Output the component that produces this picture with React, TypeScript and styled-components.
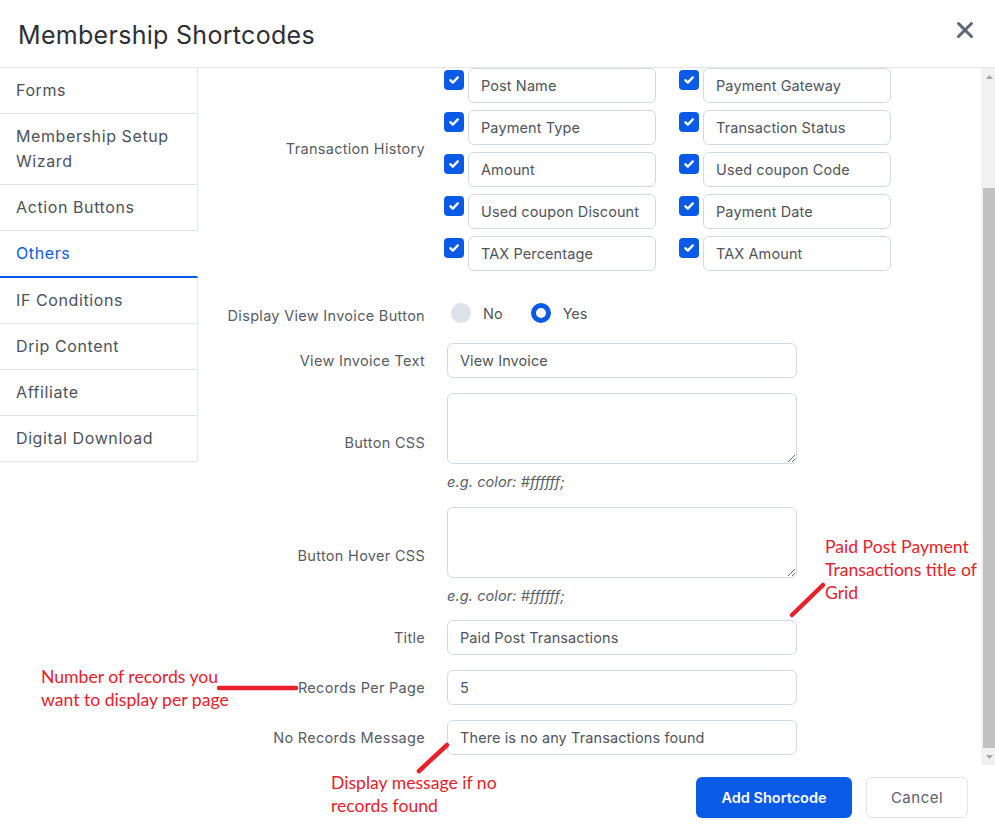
import React, { useLayoutEffect, useRef, useState } from "react";
import styled, { createGlobalStyle } from "styled-components";

const GlobalStyle = createGlobalStyle`
  html, body { margin: 0; padding: 0; background: #fff; }
  body { font-family: Inter, "Open Sans", sans-serif; }
  * { box-sizing: border-box; }
`;

const FONT = `Inter, "Open Sans", sans-serif`;

const Modal = styled.div`
  position: relative;
  width: 995px;
  height: 830px;
  display: flex;
  flex-direction: column;
  background: #fff;
  overflow: hidden;
`;

const Header = styled.header`
  height: 68px;
  flex: none;
  display: flex;
  align-items: center;
  justify-content: space-between;
  padding: 2px 18px 0 18px;
  border-bottom: 1px solid #e4e6eb;
`;

const Title = styled.h1`
  margin: 0;
  font-family: ${FONT};
  font-size: 25px;
  letter-spacing: 0.3px;
  font-weight: 400;
  color: #2c2f36;
`;

const CloseButton = styled.button`
  border: 0;
  background: none;
  padding: 0;
  width: 24px;
  height: 24px;
  margin-top: -10px;
  display: flex;
  align-items: center;
  justify-content: center;
  color: #5f6674;
  cursor: pointer;
`;

const Body = styled.div`
  flex: 1;
  min-height: 0;
  display: flex;
`;

const Sidebar = styled.nav`
  width: 198px;
  flex: none;
  display: flex;
  flex-direction: column;
`;

const NavItem = styled.div<{ $active?: boolean }>`
  padding: 10px 16px;
  font-family: ${FONT};
  font-size: 16px;
  letter-spacing: 0.6px;
  line-height: 25px;
  white-space: nowrap;
  color: ${(p) => (p.$active ? "#0a5ce6" : "#4d525c")};
  border-right: 1px solid ${(p) => (p.$active ? "transparent" : "#e2e5ec")};
  border-bottom: ${(p) => (p.$active ? "2px solid #0a5ce6" : "1px solid #e2e5ec")};
`;

const Content = styled.div`
  flex: 1;
  min-width: 0;
  overflow-y: scroll;
  scrollbar-width: none;
  &::-webkit-scrollbar {
    display: none;
  }
`;

const ScrollTrack = styled.div`
  width: 14px;
  flex: none;
  background: #f1f1f1;
  display: flex;
  flex-direction: column;
`;

const ScrollArrow = styled.div`
  height: 17px;
  flex: none;
  display: flex;
  align-items: center;
  justify-content: center;
  padding-left: 2px;
`;

const ScrollRail = styled.div`
  flex: 1;
  display: flex;
  flex-direction: column;
`;

const ScrollThumb = styled.div`
  margin-left: 2px;
  background: #c1c1c1;
`;

const Form = styled.div`
  display: flex;
  flex-direction: column;
  gap: 15px;
  padding: 86px 0 10px;
`;

const Row = styled.div<{ $extraBottom?: number }>`
  display: grid;
  grid-template-columns: 227px 350px;
  column-gap: 22px;
  align-items: center;
  margin-bottom: ${(p) => p.$extraBottom ?? 0}px;
`;

const Label = styled.label`
  text-align: right;
  font-family: ${FONT};
  font-size: 14.5px;
  letter-spacing: 0.3px;
  color: #575b64;
  white-space: nowrap;
`;

const TextInput = styled.input`
  width: 100%;
  height: 35px;
  border: 1px solid #d3d8e2;
  border-radius: 6px;
  padding: 0 12px;
  font-family: ${FONT};
  font-size: 14.5px;
  letter-spacing: 0.1px;
  color: #50545c;
  background: #fff;
  outline: none;
`;

const TextArea = styled.textarea`
  display: block;
  width: 100%;
  height: 71px;
  border: 1px solid #d3d8e2;
  border-radius: 6px;
  padding: 8px 12px;
  font-family: ${FONT};
  font-size: 14px;
  color: #50545c;
  background: #fff;
  outline: none;
`;

const Hint = styled.div`
  margin-top: 9px;
  font-family: ${FONT};
  font-size: 14.5px;
  letter-spacing: 0.1px;
  line-height: 18.5px;
  font-style: italic;
  color: #5a5e66;
`;

const CheckGrid = styled.div`
  display: grid;
  grid-template-columns: 212px 212px;
  column-gap: 23px;
  row-gap: 7px;
  margin-left: -3px;
`;

const CheckField = styled.div`
  display: flex;
  align-items: flex-start;
  gap: 4px;
`;

const CheckBox = styled.span`
  flex: none;
  width: 20px;
  height: 20px;
  margin-top: 2px;
  border-radius: 4px;
  background: #0a5ae8;
  display: flex;
  align-items: center;
  justify-content: center;
`;

const RadioGroup = styled.div`
  display: flex;
  align-items: center;
  gap: 28px;
  height: 26px;
  padding-left: 4px;
`;

const RadioOption = styled.label`
  display: flex;
  align-items: center;
  gap: 12px;
  font-family: ${FONT};
  font-size: 14.5px;
  color: #50545c;
  margin-top: -4px;
`;

const RadioDot = styled.span<{ $checked?: boolean }>`
  width: 20px;
  height: 20px;
  border-radius: 50%;
  box-sizing: border-box;
  background: ${(p) => (p.$checked ? "#fff" : "#dde1ea")};
  border: ${(p) => (p.$checked ? "5px solid #0a5ae8" : "0")};
`;

const Footer = styled.footer`
  flex: none;
  height: 65px;
  display: flex;
  justify-content: flex-end;
  align-items: flex-start;
  gap: 14px;
  padding: 12px 27px 0;
`;

const PrimaryButton = styled.button`
  width: 156px;
  height: 41px;
  border: 0;
  border-radius: 6px;
  background: #0a5ae8;
  color: #fff;
  font-family: ${FONT};
  font-size: 14.5px;
  font-weight: 600;
  cursor: pointer;
`;

const SecondaryButton = styled.button`
  width: 102px;
  height: 41px;
  border: 1px solid #e1e4ea;
  border-radius: 6px;
  background: #fff;
  color: #5a5f6b;
  font-family: ${FONT};
  font-size: 15px;
  letter-spacing: 0.5px;
  cursor: pointer;
`;

const Note = styled.div<{ $x: number; $y: number }>`
  position: absolute;
  left: ${(p) => p.$x}px;
  top: ${(p) => p.$y}px;
  font-family: Lato, "Open Sans", sans-serif;
  font-size: 17.6px;
  line-height: 23px;
  color: #e8202a;
  white-space: nowrap;
`;

const Overlay = styled.svg`
  position: absolute;
  left: 0;
  top: 0;
  pointer-events: none;
`;

const navItems = [
  "Forms",
  "Membership Setup Wizard",
  "Action Buttons",
  "Others",
  "IF Conditions",
  "Drip Content",
  "Affiliate",
  "Digital Download",
];

const checkFields: [string, string][] = [
  ["Transaction ID", "Member Name"],
  ["Post Name", "Payment Gateway"],
  ["Payment Type", "Transaction Status"],
  ["Amount", "Used coupon Code"],
  ["Used coupon Discount", "Payment Date"],
  ["TAX Percentage", "TAX Amount"],
];

const Check = () => (
  <CheckBox>
    <svg width="12" height="12" viewBox="0 0 12 12">
      <path d="M2.3 6.2 L4.8 8.6 L9.8 3.4" fill="none" stroke="#fff" strokeWidth="2.3" strokeLinecap="round" strokeLinejoin="round" />
    </svg>
  </CheckBox>
);

export default function App() {
  const scrollRef = useRef<HTMLDivElement>(null);
  const railRef = useRef<HTMLDivElement>(null);
  const [thumb, setThumb] = useState({ top: 0, height: 0 });

  useLayoutEffect(() => {
    const el = scrollRef.current;
    const rail = railRef.current;
    if (!el || !rail) return;
    el.scrollTop = el.scrollHeight;
    const railH = rail.clientHeight;
    const ratio = el.clientHeight / el.scrollHeight;
    const h = Math.max(20, Math.round(railH * ratio));
    const maxScroll = el.scrollHeight - el.clientHeight;
    const top = maxScroll > 0 ? Math.round(((railH - h) * el.scrollTop) / maxScroll) : 0;
    setThumb({ top, height: h });
  }, []);

  return (
    <>
      <GlobalStyle />
      <Modal>
        <Header>
          <Title>Membership Shortcodes</Title>
          <CloseButton aria-label="Close">
            <svg width="18" height="18" viewBox="0 0 18 18">
              <path d="M2.5 2.5 L15.5 15.5 M15.5 2.5 L2.5 15.5" stroke="currentColor" strokeWidth="3" strokeLinecap="round" />
            </svg>
          </CloseButton>
        </Header>
        <Body>
          <Sidebar>
            {navItems.map((n) => (
              <NavItem key={n} $active={n === "Others"}>
                {n === "Membership Setup Wizard" ? (
                  <>
                    Membership Setup
                    <br />
                    Wizard
                  </>
                ) : (
                  n
                )}
              </NavItem>
            ))}
          </Sidebar>
          <Content ref={scrollRef}>
            <Form>
              <Row $extraBottom={16}>
                <Label>Transaction History</Label>
                <CheckGrid>
                  {checkFields.flat().map((f) => (
                    <CheckField key={f}>
                      <Check />
                      <TextInput defaultValue={f} />
                    </CheckField>
                  ))}
                </CheckGrid>
              </Row>
              <Row>
                <Label>Display View Invoice Button</Label>
                <RadioGroup>
                  <RadioOption>
                    <RadioDot />
                    No
                  </RadioOption>
                  <RadioOption>
                    <RadioDot $checked />
                    Yes
                  </RadioOption>
                </RadioGroup>
              </Row>
              <Row>
                <Label>View Invoice Text</Label>
                <TextInput defaultValue="View Invoice" />
              </Row>
              <Row>
                <Label>Button CSS</Label>
                <div>
                  <TextArea />
                  <Hint>e.g. color: #ffffff;</Hint>
                </div>
              </Row>
              <Row>
                <Label>Button Hover CSS</Label>
                <div>
                  <TextArea />
                  <Hint>e.g. color: #ffffff;</Hint>
                </div>
              </Row>
              <Row>
                <Label>Title</Label>
                <TextInput defaultValue="Paid Post Transactions" />
              </Row>
              <Row>
                <Label>Records Per Page</Label>
                <TextInput defaultValue="5" />
              </Row>
              <Row>
                <Label>No Records Message</Label>
                <TextInput defaultValue="There is no any Transactions found" />
              </Row>
            </Form>
          </Content>
          <ScrollTrack>
            <ScrollArrow>
              <svg width="7" height="4" viewBox="0 0 7 4">
                <path d="M0 4 L3.5 0 L7 4 Z" fill="#a3a3a3" />
              </svg>
            </ScrollArrow>
            <ScrollRail ref={railRef}>
              <ScrollThumb style={{ marginTop: thumb.top, height: thumb.height }} />
            </ScrollRail>
            <ScrollArrow>
              <svg width="7" height="4" viewBox="0 0 7 4">
                <path d="M0 0 L7 0 L3.5 4 Z" fill="#a3a3a3" />
              </svg>
            </ScrollArrow>
          </ScrollTrack>
        </Body>
        <Footer>
          <PrimaryButton>Add Shortcode</PrimaryButton>
          <SecondaryButton>Cancel</SecondaryButton>
        </Footer>

        <Note $x={825} $y={535}>
          Paid Post Payment
          <br />
          Transactions title of
          <br />
          Grid
        </Note>
        <Note $x={41} $y={665}>
          Number of records you
          <br />
          want to display per page
        </Note>
        <Note $x={331} $y={771}>
          Display message if no
          <br />
          records found
        </Note>
        <Overlay width="995" height="830">
          <g stroke="#e8202a" strokeWidth="4.5" strokeLinecap="round">
            <line x1="792" y1="615" x2="823" y2="585" />
            <line x1="219" y1="688" x2="296" y2="688" />
            <line x1="419" y1="771" x2="447" y2="745" />
          </g>
        </Overlay>
      </Modal>
    </>
  );
}
